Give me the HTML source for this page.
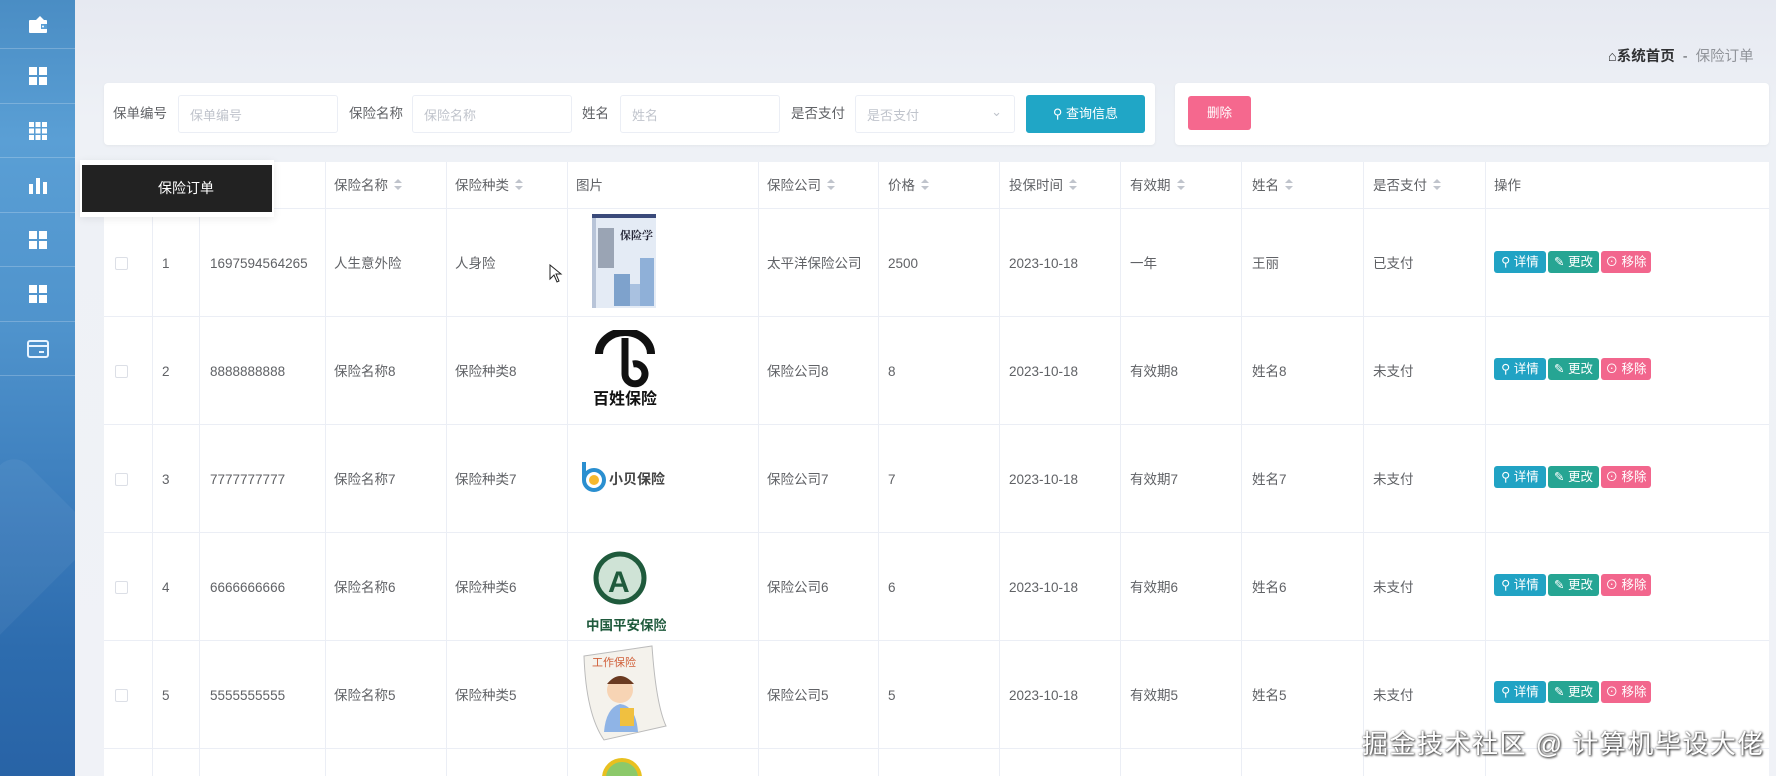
<!DOCTYPE html>
<html><head><meta charset="utf-8">
<style>
*{margin:0;padding:0;box-sizing:border-box}
body{width:1776px;height:776px;overflow:hidden;font-family:"Liberation Sans","Noto Sans CJK SC",sans-serif;background:linear-gradient(#e6e9f1,#eef1f6 120px,#f0f2f7);position:relative;color:#606266}
.side{position:absolute;left:0;top:0;width:75px;height:776px;background:linear-gradient(180deg,#4a8dc4 0,#5a9fd5 140px,#4f93cc 330px,#3a7bbb 520px,#2d6cae 650px,#2863a6 776px);overflow:hidden}
.side:after{content:"";position:absolute;left:-60px;top:470px;width:120px;height:160px;background:rgba(255,255,255,.05);transform:rotate(45deg);border-radius:20px}
.si{position:absolute;left:0;width:75px;border-bottom:1px solid rgba(255,255,255,.22);display:flex;align-items:center;justify-content:center}
.abs{position:absolute}
.card{position:absolute;background:#fff;border-radius:4px;box-shadow:0 1px 3px rgba(0,0,0,.05)}
.lbl{position:absolute;font-size:13.5px;color:#606266;top:104px;line-height:20px}
.inp{position:absolute;top:95px;height:38px;border:1px solid #ebeef5;border-radius:3px;font-size:13px;color:#c0c4cc;padding:9px 0 0 11px;background:#fff}
.tbl{position:absolute;left:104px;top:162px;width:1665px;height:614px;background:#fff}
.vl{position:absolute;top:162px;width:1px;height:614px;background:#ebeef5}
.hl{position:absolute;left:104px;width:1665px;height:1px;background:#ebeef5}
.t{position:absolute;font-size:13.5px;color:#606266;white-space:nowrap;line-height:20px;height:20px}
.srt{display:inline-block;vertical-align:middle;margin-left:6px;width:8px;height:12px;position:relative;top:-1px}
.srt:before{content:"";position:absolute;left:0;top:0;border:4px solid transparent;border-bottom:4px solid #c0c4cc;border-top:0}
.srt:after{content:"";position:absolute;left:0;top:7px;border:4px solid transparent;border-top:4px solid #c0c4cc;border-bottom:0}
.cb{position:absolute;left:115px;width:13px;height:13px;border:1px solid #dcdfe6;border-radius:2px;background:#fff}
.btn{position:absolute;height:22px;border-radius:3px;color:#fff;font-size:12.5px;line-height:22px;text-align:center}
.b1{background:#21a3c4;left:1494px;width:52px}
.b2{background:#26a593;left:1548px;width:51px}
.b3{background:#f2668d;left:1601px;width:50px}
</style></head><body>
<div class="side">
 <div class="si" style="top:0;height:49px"><svg width="20" height="17" viewBox="0 0 20 17"><path d="M12 0 L16 4 H8 Z" fill="#fff"/><rect x="1" y="4" width="18" height="13" rx="1" fill="#fff"/><rect x="13" y="8" width="6" height="5" fill="#5a9fd5"/><circle cx="15" cy="10.5" r="1" fill="#fff"/></svg></div>
 <div class="si" style="top:49px;height:55px"><svg width="18" height="18"><rect x="0" y="0" width="8" height="8" fill="#fff"/><rect x="10" y="0" width="8" height="8" fill="#fff"/><rect x="0" y="10" width="8" height="8" fill="#fff"/><rect x="10" y="10" width="8" height="8" fill="#fff"/></svg></div>
 <div class="si" style="top:104px;height:54px"><svg width="18" height="18"><g fill="#fff"><rect x="0" y="0" width="5" height="5"/><rect x="6.5" y="0" width="5" height="5"/><rect x="13" y="0" width="5" height="5"/><rect x="0" y="6.5" width="5" height="5"/><rect x="6.5" y="6.5" width="5" height="5"/><rect x="13" y="6.5" width="5" height="5"/><rect x="0" y="13" width="5" height="5"/><rect x="6.5" y="13" width="5" height="5"/><rect x="13" y="13" width="5" height="5"/></g></svg></div>
 <div class="si" style="top:158px;height:55px"><svg width="18" height="18"><g fill="#fff"><rect x="0" y="8" width="4" height="10"/><rect x="7" y="2" width="4" height="16"/><rect x="14" y="6" width="4" height="12"/></g></svg></div>
 <div class="si" style="top:213px;height:54px"><svg width="18" height="18"><rect x="0" y="0" width="8" height="8" fill="#fff"/><rect x="10" y="0" width="8" height="8" fill="#fff"/><rect x="0" y="10" width="8" height="8" fill="#fff"/><rect x="10" y="10" width="8" height="8" fill="#fff"/></svg></div>
 <div class="si" style="top:267px;height:55px"><svg width="18" height="18"><rect x="0" y="0" width="8" height="8" fill="#fff"/><rect x="10" y="0" width="8" height="8" fill="#fff"/><rect x="0" y="10" width="8" height="8" fill="#fff"/><rect x="10" y="10" width="8" height="8" fill="#fff"/></svg></div>
 <div class="si" style="top:322px;height:54px"><svg width="22" height="18"><rect x="1" y="1" width="20" height="16" rx="2" fill="none" stroke="#e8f4ff" stroke-width="2"/><line x1="1" y1="6" x2="21" y2="6" stroke="#e8f4ff" stroke-width="2"/><line x1="12" y1="12" x2="17" y2="12" stroke="#e8f4ff" stroke-width="2"/></svg></div>
</div>

<div class="abs" style="left:1608px;top:45px;font-size:14.5px;white-space:nowrap"><span style="color:#303133;font-weight:bold">&#8962;系统首页</span><span style="color:#606266;margin:0 8px">-</span><span style="color:#909399">保险订单</span></div>

<div class="card" style="left:104px;top:83px;width:1051px;height:62px"></div>
<div class="lbl" style="left:113px">保单编号</div>
<div class="inp" style="left:178px;width:160px">保单编号</div>
<div class="lbl" style="left:349px">保险名称</div>
<div class="inp" style="left:412px;width:160px">保险名称</div>
<div class="lbl" style="left:582px">姓名</div>
<div class="inp" style="left:620px;width:160px">姓名</div>
<div class="lbl" style="left:791px">是否支付</div>
<div class="inp" style="left:855px;width:160px">是否支付<span style="position:absolute;right:12px;top:8px;color:#c0c4cc">&#8964;</span></div>
<div class="abs" style="left:1026px;top:95px;width:119px;height:38px;background:#20a6c6;border-radius:3px;color:#fff;font-size:13px;text-align:center;line-height:38px">&#9906; 查询信息</div>
<div class="card" style="left:1175px;top:83px;width:594px;height:62px"></div>
<div class="abs" style="left:1188px;top:96px;width:63px;height:34px;background:#f5688e;border-radius:3px;color:#fff;font-size:12.5px;text-align:center;line-height:34px">删除</div>

<div class="tbl"></div>
<div class="hl" style="top:208px"></div><div class="hl" style="top:316px"></div><div class="hl" style="top:424px"></div><div class="hl" style="top:532px"></div><div class="hl" style="top:640px"></div><div class="hl" style="top:748px"></div>
<div class="vl" style="left:152px"></div><div class="vl" style="left:199px"></div><div class="vl" style="left:325px"></div><div class="vl" style="left:446px"></div><div class="vl" style="left:567px"></div><div class="vl" style="left:758px"></div><div class="vl" style="left:878px"></div><div class="vl" style="left:999px"></div><div class="vl" style="left:1120px"></div><div class="vl" style="left:1241px"></div><div class="vl" style="left:1363px"></div><div class="vl" style="left:1485px"></div>

<div class="t" style="top:176px;left:334px">保险名称<i class="srt"></i></div>
<div class="t" style="top:176px;left:455px">保险种类<i class="srt"></i></div>
<div class="t" style="top:176px;left:576px">图片</div>
<div class="t" style="top:176px;left:767px">保险公司<i class="srt"></i></div>
<div class="t" style="top:176px;left:888px">价格<i class="srt"></i></div>
<div class="t" style="top:176px;left:1009px">投保时间<i class="srt"></i></div>
<div class="t" style="top:176px;left:1130px">有效期<i class="srt"></i></div>
<div class="t" style="top:176px;left:1252px">姓名<i class="srt"></i></div>
<div class="t" style="top:176px;left:1373px">是否支付<i class="srt"></i></div>
<div class="t" style="top:176px;left:1494px">操作</div>

<!-- rows -->
<div class="cb" style="top:257px"></div><div class="t" style="top:254px;left:162px">1</div><div class="t" style="top:254px;left:210px">1697594564265</div><div class="t" style="top:254px;left:334px">人生意外险</div><div class="t" style="top:254px;left:455px">人身险</div><div class="t" style="top:254px;left:767px">太平洋保险公司</div><div class="t" style="top:254px;left:888px">2500</div><div class="t" style="top:254px;left:1009px">2023-10-18</div><div class="t" style="top:254px;left:1130px">一年</div><div class="t" style="top:254px;left:1252px">王丽</div><div class="t" style="top:254px;left:1373px">已支付</div>
<div class="btn b1" style="top:251px">&#9906; 详情</div><div class="btn b2" style="top:251px">&#9998; 更改</div><div class="btn b3" style="top:251px">&#8857; 移除</div>

<div class="cb" style="top:365px"></div><div class="t" style="top:362px;left:162px">2</div><div class="t" style="top:362px;left:210px">8888888888</div><div class="t" style="top:362px;left:334px">保险名称8</div><div class="t" style="top:362px;left:455px">保险种类8</div><div class="t" style="top:362px;left:767px">保险公司8</div><div class="t" style="top:362px;left:888px">8</div><div class="t" style="top:362px;left:1009px">2023-10-18</div><div class="t" style="top:362px;left:1130px">有效期8</div><div class="t" style="top:362px;left:1252px">姓名8</div><div class="t" style="top:362px;left:1373px">未支付</div>
<div class="btn b1" style="top:358px">&#9906; 详情</div><div class="btn b2" style="top:358px">&#9998; 更改</div><div class="btn b3" style="top:358px">&#8857; 移除</div>

<div class="cb" style="top:473px"></div><div class="t" style="top:470px;left:162px">3</div><div class="t" style="top:470px;left:210px">7777777777</div><div class="t" style="top:470px;left:334px">保险名称7</div><div class="t" style="top:470px;left:455px">保险种类7</div><div class="t" style="top:470px;left:767px">保险公司7</div><div class="t" style="top:470px;left:888px">7</div><div class="t" style="top:470px;left:1009px">2023-10-18</div><div class="t" style="top:470px;left:1130px">有效期7</div><div class="t" style="top:470px;left:1252px">姓名7</div><div class="t" style="top:470px;left:1373px">未支付</div>
<div class="btn b1" style="top:466px">&#9906; 详情</div><div class="btn b2" style="top:466px">&#9998; 更改</div><div class="btn b3" style="top:466px">&#8857; 移除</div>

<div class="cb" style="top:581px"></div><div class="t" style="top:578px;left:162px">4</div><div class="t" style="top:578px;left:210px">6666666666</div><div class="t" style="top:578px;left:334px">保险名称6</div><div class="t" style="top:578px;left:455px">保险种类6</div><div class="t" style="top:578px;left:767px">保险公司6</div><div class="t" style="top:578px;left:888px">6</div><div class="t" style="top:578px;left:1009px">2023-10-18</div><div class="t" style="top:578px;left:1130px">有效期6</div><div class="t" style="top:578px;left:1252px">姓名6</div><div class="t" style="top:578px;left:1373px">未支付</div>
<div class="btn b1" style="top:574px">&#9906; 详情</div><div class="btn b2" style="top:574px">&#9998; 更改</div><div class="btn b3" style="top:574px">&#8857; 移除</div>

<div class="cb" style="top:689px"></div><div class="t" style="top:686px;left:162px">5</div><div class="t" style="top:686px;left:210px">5555555555</div><div class="t" style="top:686px;left:334px">保险名称5</div><div class="t" style="top:686px;left:455px">保险种类5</div><div class="t" style="top:686px;left:767px">保险公司5</div><div class="t" style="top:686px;left:888px">5</div><div class="t" style="top:686px;left:1009px">2023-10-18</div><div class="t" style="top:686px;left:1130px">有效期5</div><div class="t" style="top:686px;left:1252px">姓名5</div><div class="t" style="top:686px;left:1373px">未支付</div>
<div class="btn b1" style="top:681px">&#9906; 详情</div><div class="btn b2" style="top:681px">&#9998; 更改</div><div class="btn b3" style="top:681px">&#8857; 移除</div>

<!-- images -->
<svg class="abs" style="left:592px;top:214px" width="64" height="94" viewBox="0 0 64 94">
<rect width="64" height="94" fill="#e4ebf5"/><rect width="64" height="4" fill="#3a4a7a"/><rect x="0" y="4" width="4" height="90" fill="#b8c4d8"/>
<text x="28" y="25" font-size="11" font-weight="bold" fill="#223" font-family="Noto Serif CJK SC,serif">保险学</text>
<rect x="6" y="14" width="16" height="40" fill="#9aa4b4"/><rect x="48" y="44" width="14" height="48" fill="#8fb0d8"/><rect x="22" y="60" width="16" height="32" fill="#7ea2cc"/><rect x="38" y="70" width="10" height="22" fill="#a9c1e0"/>
</svg>
<svg class="abs" style="left:592px;top:330px" width="66" height="76" viewBox="0 0 66 76">
<path d="M7 24 A26 22 0 0 1 59 24" fill="none" stroke="#111" stroke-width="8"/>
<path d="M33 8 V44 A10 10 0 1 0 41 34" fill="none" stroke="#111" stroke-width="7"/>
<text x="33" y="74" text-anchor="middle" font-size="16" font-weight="bold" fill="#111" font-family="Noto Sans CJK SC,sans-serif">百姓保险</text>
</svg>
<svg class="abs" style="left:579px;top:460px" width="92" height="34" viewBox="0 0 92 34">
<path d="M5 2 V20" stroke="#2a8fd0" stroke-width="4"/><circle cx="15" cy="20" r="10" fill="none" stroke="#2a8fd0" stroke-width="4"/><circle cx="15" cy="20" r="5" fill="#f5b82e"/>
<text x="30" y="24" font-size="14" font-weight="bold" fill="#444" font-family="Noto Sans CJK SC,sans-serif">小贝保险</text>
</svg>
<svg class="abs" style="left:584px;top:550px" width="82" height="84" viewBox="0 0 82 84">
<circle cx="36" cy="28" r="24" fill="#cfe3d6" stroke="#1f5a3c" stroke-width="5"/>
<text x="24" y="42" font-size="30" font-weight="bold" fill="#1f5a3c" font-family="Liberation Sans,sans-serif">A</text>
<text x="2" y="80" font-size="13.5" font-weight="bold" fill="#1f5a3c" font-family="Noto Sans CJK SC,sans-serif">中国平安保险</text>
</svg>
<svg class="abs" style="left:580px;top:644px" width="88" height="98" viewBox="0 0 88 98">
<path d="M4 12 L72 2 Q76 60 86 82 L24 96 Q6 70 4 12Z" fill="#f4f2ec" stroke="#bbb"/>
<text x="12" y="22" font-size="11" fill="#d0603a" font-family="Noto Sans CJK SC,sans-serif">工作保险</text>
<circle cx="40" cy="46" r="13" fill="#f7d4b4"/><path d="M27 40 Q40 24 54 40 Z" fill="#6a3a20"/>
<path d="M24 88 Q26 64 40 60 Q56 62 58 88Z" fill="#8fb4e6"/><rect x="40" y="64" width="14" height="18" fill="#f0c040"/>
</svg>
<svg class="abs" style="left:600px;top:756px" width="44" height="20"><circle cx="22" cy="22" r="18" fill="#8cc96a" stroke="#e8c020" stroke-width="4"/></svg>

<!-- tooltip -->
<div class="abs" style="left:80px;top:160px;width:194px;height:57px;background:#fff;box-shadow:0 2px 8px rgba(0,0,0,.08)"></div>
<div class="abs" style="left:82px;top:165px;width:190px;height:47px;background:#222;color:#fff;font-size:14px;text-align:center;line-height:47px;padding-left:18px">保险订单</div>

<!-- cursor -->
<svg class="abs" style="left:549px;top:264px" width="14" height="20"><path d="M1 1 V15 L5 11 L8 18 L10 17 L7 10 H12 Z" fill="#fff" stroke="#222"/></svg>

<div class="abs" style="left:1362px;top:724px;font-size:26px;letter-spacing:1.5px;color:#fff;white-space:nowrap;text-shadow:0 0 2px #444,1px 1px 2px #333">掘金技术社区 @ 计算机毕设大佬</div>
</body></html>
